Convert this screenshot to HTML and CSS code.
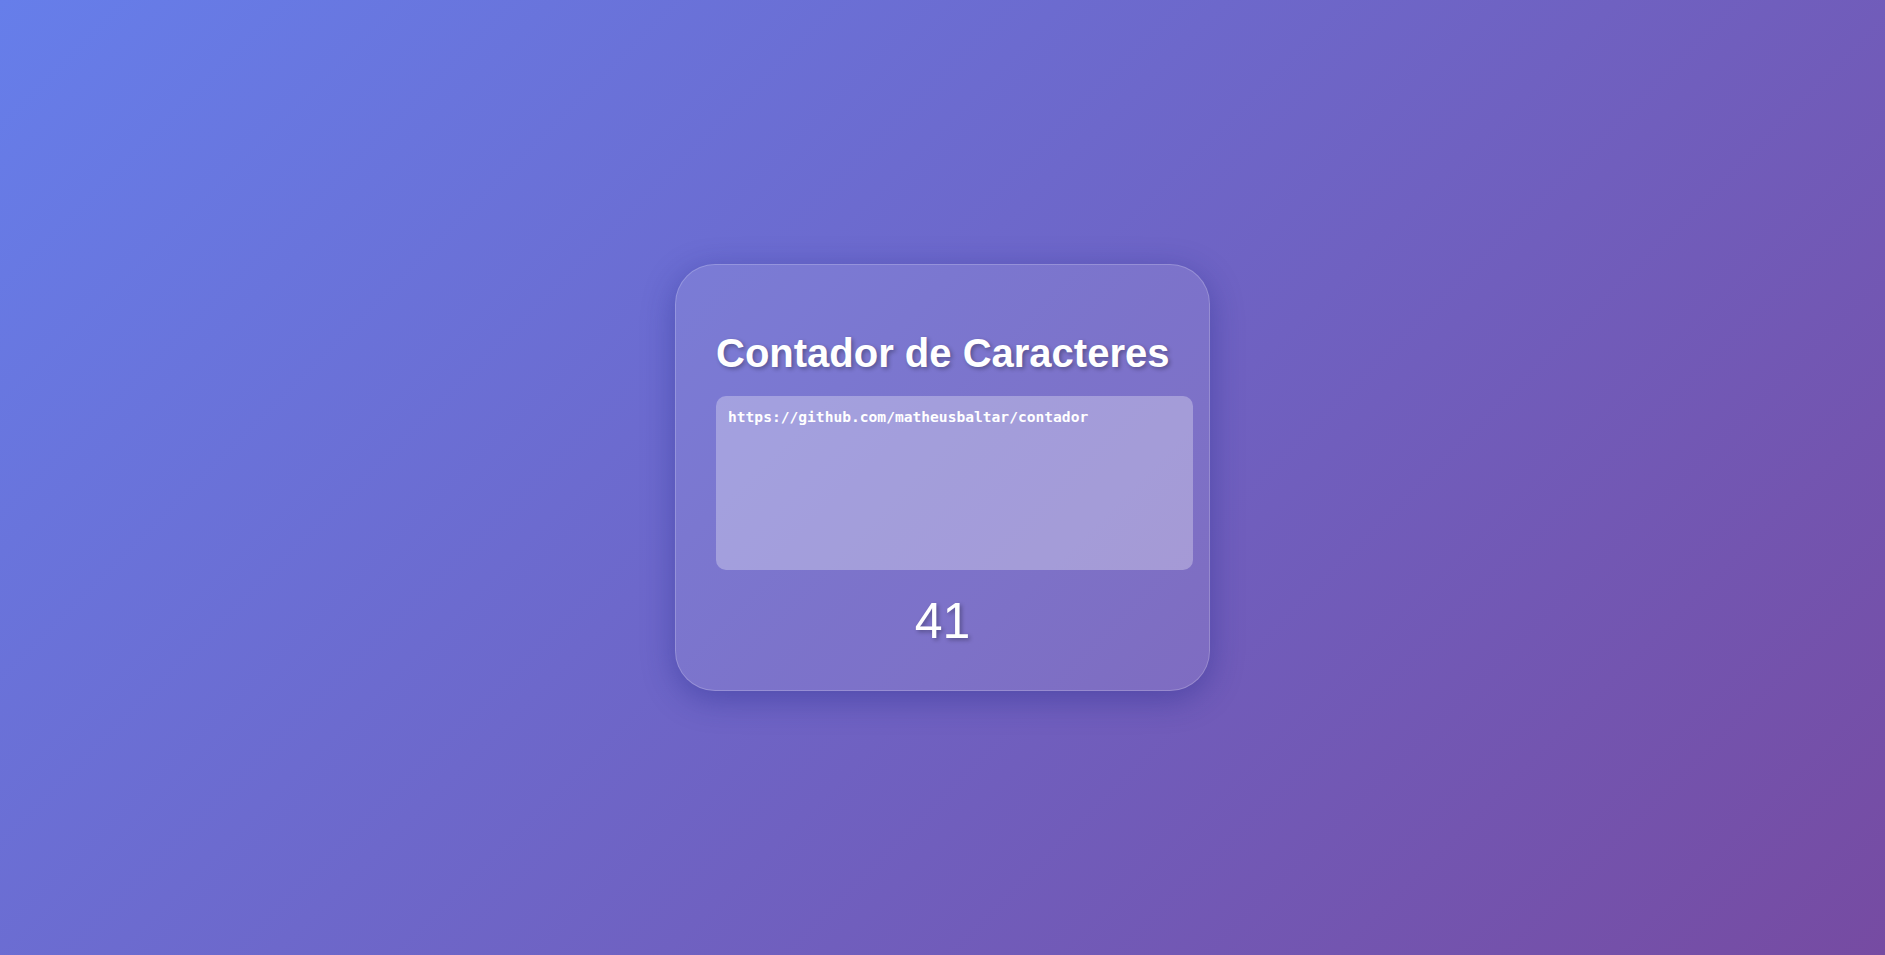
FILE: index.html
```html
<!DOCTYPE html>
<html lang="pt-BR">
<head>
<meta charset="UTF-8">
<title>Contador de Caracteres</title>
<link rel="stylesheet" href="styles.css">
</head>
<body>
  <main class="card">
    <h1 class="title">Contador de Caracteres</h1>
    <textarea class="input" spellcheck="false">https://github.com/matheusbaltar/contador</textarea>
    <div class="count">41</div>
  </main>
</body>
</html>
```

FILE: styles.css
```css
* { margin: 0; }

html, body {
  height: 100%;
}

body {
  margin: 0;
  min-height: 100vh;
  display: flex;
  align-items: center;
  justify-content: center;
  background: linear-gradient(135deg, #667eea 0%, #764ba2 100%);
  font-family: "Liberation Sans", Arial, sans-serif;
  color: #fff;
}

.card {
  width: 453px;
  padding: 40px;
  border-radius: 40px;
  background: rgba(255, 255, 255, 0.1);
  border: 1px solid rgba(255, 255, 255, 0.2);
  box-shadow: 0 8px 32px 0 rgba(31, 38, 135, 0.4);
  text-align: center;
}

.title {
  margin: 26px 0 20px;
  font-size: 40px;
  font-weight: bold;
  line-height: normal;
  color: #fff;
  text-shadow: 2px 2px 4px rgba(0, 0, 0, 0.3);
  white-space: nowrap;
}

.input {
  display: block;
  width: 100%;
  height: 150px;
  padding: 12px;
  border: none;
  border-radius: 10px;
  background: rgba(255, 255, 255, 0.3);
  color: #fff;
  font-family: "DejaVu Sans Mono", "Liberation Mono", monospace;
  font-size: 14.6px;
  font-weight: bold;
  line-height: 1.2;
  resize: none;
  outline: none;
  text-align: left;
}

.count {
  margin-top: 22px;
  font-size: 50px;
  line-height: normal;
  color: #fff;
  text-shadow: 2px 2px 4px rgba(0, 0, 0, 0.3);
}
```
